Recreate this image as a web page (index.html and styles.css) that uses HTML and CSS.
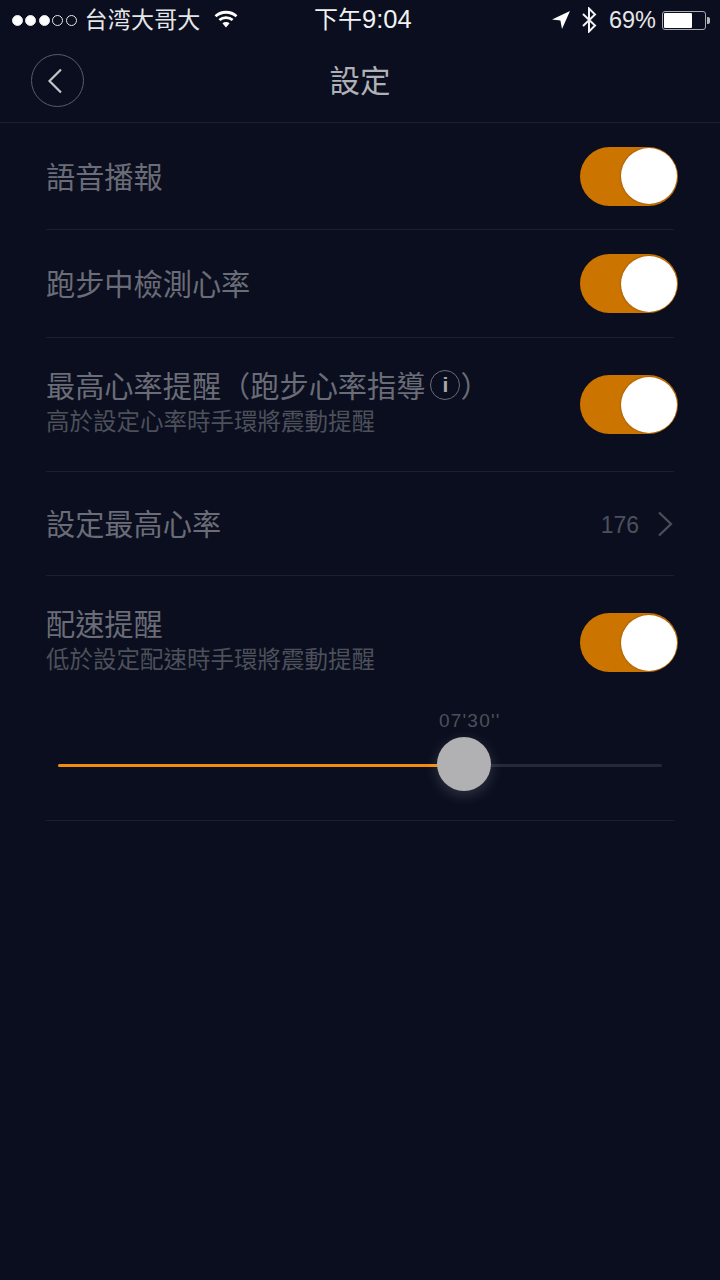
FILE: index.html
```html
<!DOCTYPE html>
<html lang="zh-Hant">
<head>
    <meta charset="UTF-8">
    <meta name="viewport" content="width=device-width, initial-scale=1.0">
    <title>設定</title>
    <link rel="stylesheet" href="styles.css">
</head>
<body>
    <div class="status-bar">
        <div class="status-left">
            <div class="signal">
                <span class="dot on"></span><span class="dot on"></span><span class="dot on"></span><span class="dot"></span><span class="dot"></span>
            </div>
            <span class="carrier">台湾大哥大</span>
            <svg class="wifi" width="24" height="18" viewBox="0 0 24 18">
                <path d="M1.500 6.200C7.400 .9 16.600 .9 22.500 6.200" fill="none" stroke="#fff" stroke-width="2.800"/>
                <path d="M5.400 10C9 6.800 15 6.800 18.600 10" fill="none" stroke="#fff" stroke-width="2.800"/>
                <path d="M8.400 13.200 12 17.500l3.600-4.300c-2-1.700-5.200-1.700-7.200 0z" fill="#fff"/>
            </svg>
        </div>
        <div class="status-time">下午<span class="time-digits">9:04</span></div>
        <div class="status-right">
            <svg class="arrow" width="18" height="18" viewBox="0 0 18 18">
                <path d="M18 0 0 8.600l8.400 .9 1.600 8.500z" fill="#fff"/>
            </svg>
            <svg class="bt" width="16" height="26" viewBox="0 0 16 26">
                <path d="M2 7l12 11.500L8 24.500V1.500l6 6L2 19" fill="none" stroke="#f2f2f3" stroke-width="2"/>
            </svg>
            <span class="battery-pct">69%</span>
            <div class="battery"><div class="battery-level"></div></div>
            <div class="battery-cap"></div>
        </div>
    </div>

    <div class="nav">
        <div class="back">
            <svg width="16" height="26" viewBox="0 0 16 26">
                <path d="M14 1.500 2.500 13 14 24.500" fill="none" stroke="#c4c5c9" stroke-width="2.200"/>
            </svg>
        </div>
        <div class="nav-title">設定</div>
    </div>

    <div class="list">
        <div class="row row-voice">
            <div class="row-title">語音播報</div>
            <div class="toggle"><div class="knob"></div></div>
        </div>
        <div class="row row-detect">
            <div class="row-title">跑步中檢測心率</div>
            <div class="toggle"><div class="knob"></div></div>
        </div>
        <div class="row row-max">
            <div class="row-text">
                <div class="row-title title-info">最高心率提醒（跑步心率指導<span class="info">i</span><span class="paren">）</span></div>
                <div class="row-sub">高於設定心率時手環將震動提醒</div>
            </div>
            <div class="toggle"><div class="knob"></div></div>
        </div>
        <div class="row row-set">
            <div class="row-title">設定最高心率</div>
            <div class="row-value">
                <span class="row-num">176</span>
                <svg width="16" height="26" viewBox="0 0 16 26">
                    <path d="M2 1.500 14 13 2 24.500" fill="none" stroke="#4d505b" stroke-width="2.200"/>
                </svg>
            </div>
        </div>
        <div class="pace">
            <div class="pace-head">
                <div class="row-text">
                    <div class="row-title">配速提醒</div>
                    <div class="row-sub">低於設定配速時手環將震動提醒</div>
                </div>
                <div class="toggle"><div class="knob"></div></div>
            </div>
            <div class="slider-label">07'30''</div>
            <div class="slider">
                <div class="slider-fill" style="width: 66%"></div>
                <div class="slider-thumb"></div>
            </div>
        </div>
    </div>
</body>
</html>
```

FILE: styles.css
```css
body{
    margin: 0;
    width: 720px;
    height: 1280px;
    overflow: hidden;
    background: #0a0e1e;
    font-family: "Noto Sans CJK TC", "Noto Sans", sans-serif;
}

.status-bar{
    height: 40px;
    display: flex;
    align-items: center;
    justify-content: space-between;
    padding: 0 9px 0 12px;
    color: #fff;
    position: relative;
}
.status-left,.status-right{
    display: flex;
    align-items: center;
}
.signal{
    display: flex;
    gap: 2.400px;
}
.dot{
    width: 11px;
    height: 11px;
    box-sizing: border-box;
    border: 1px solid #e8e8ea;
    border-radius: 50%;
}
.dot.on{
    background: #fff;
}
.carrier{
    font-size: 23px;
    line-height: 40px;
    margin: -4px 0 0 8px;
    letter-spacing: 0.200px;
    color: #e6e6e8;
}
.wifi{
    margin-left: 13px;
    margin-top: -3px;
}
.status-time{
    position: absolute;
    left: 314px;
    top: -2px;
    font-size: 24px;
    line-height: 40px;
    color: #f2f2f3;
}
.time-digits{
    font-family: "Liberation Sans", sans-serif;
    font-size: 25.500px;
}
.arrow{
    margin-top: -1px;
}
.bt{
    margin-left: 11px;
    margin-top: -1px;
}
.battery-pct{
    font-family: "Liberation Sans", sans-serif;
    font-size: 23.500px;
    line-height: 40px;
    margin-left: 12px;
    color: #e6e6e8;
}
.battery{
    width: 44px;
    height: 19px;
    box-sizing: border-box;
    border: 1px solid #a9aab0;
    border-radius: 3px;
    padding: 1px;
    margin-left: 6px;
}
.battery-level{
    width: 28px;
    height: 100%;
    background: #fff;
    border-radius: 1px;
}
.battery-cap{
    width: 3px;
    height: 7px;
    background: #b5b6ba;
    border-radius: 0 2px 2px 0;
    margin-left: 1px;
    margin-right: 1px;
}

.nav{
    height: 83px;
    box-sizing: border-box;
    border-bottom: 1px solid #1b2031;
    padding-bottom: 5px;
    display: flex;
    align-items: center;
    justify-content: center;
    position: relative;
}
.back{
    position: absolute;
    left: 31px;
    top: 14px;
    width: 53px;
    height: 53px;
    box-sizing: border-box;
    border: 1.500px solid #5a5c67;
    border-radius: 50%;
    display: flex;
    align-items: center;
    justify-content: center;
    padding-right: 5px;
}
.nav-title{
    font-size: 30.500px;
    color: #b0b1b7;
}

.list{
    margin: 0 46px;
}
.row{
    display: flex;
    align-items: center;
    justify-content: space-between;
    box-sizing: border-box;
    border-bottom: 1px solid #1b2031;
}
.row-voice{ height: 107px; }
.row-detect{ height: 108px; }
.row-max{ height: 134px; }
.row-set{ height: 104px; }
.row-title{
    font-size: 29.200px;
    line-height: 37px;
    color: #6a6c77;
    white-space: nowrap;
}
.row > .row-title{
    margin-top: -2px;
}
.row-sub{
    font-size: 23.500px;
    line-height: 34px;
    color: #4d505b;
    white-space: nowrap;
}
.row-text{
    margin-top: -6px;
}
.title-info{
    display: flex;
    align-items: center;
}
.info{
    width: 30px;
    height: 30px;
    box-sizing: border-box;
    border: 1.500px solid #6a6c77;
    border-radius: 50%;
    margin-left: 5px;
    display: flex;
    align-items: center;
    justify-content: center;
    font-family: "Liberation Sans", sans-serif;
    font-size: 21px;
    font-weight: bold;
    color: #a8a9af;
}
.toggle{
    width: 98px;
    height: 59px;
    margin-right: -4px;
    border-radius: 30px;
    background: #cc7400;
    display: flex;
    align-items: center;
    justify-content: flex-end;
    padding-right: 1px;
    box-sizing: border-box;
}
.knob{
    width: 56px;
    height: 56px;
    border-radius: 50%;
    background: #fff;
    box-shadow: 0 0 2px rgba(70, 35, 0, 0.6);
}
.row-value{
    display: flex;
    align-items: center;
    gap: 18px;
    margin-right: 1px;
    font-family: "Liberation Sans", sans-serif;
    font-size: 23px;
    color: #4d505b;
}
.row-num{
    padding-top: 4px;
}

.pace{
    border-bottom: 1px solid #1b2031;
    height: 245px;
    box-sizing: border-box;
}
.pace-head{
    display: flex;
    align-items: center;
    justify-content: space-between;
    height: 133px;
}
.slider-label{
    font-family: "Liberation Sans", sans-serif;
    font-size: 19px;
    line-height: 24px;
    letter-spacing: 1.200px;
    color: #4d505b;
    padding-left: 393px;
}
.slider{
    position: relative;
    height: 3px;
    margin: 31px 12px 0;
    background: #23283a;
    border-radius: 2px;
}
.slider-fill{
    height: 100%;
    background: #f28c10;
    border-radius: 2px;
}
.slider-thumb{
    position: absolute;
    left: 379px;
    top: -27px;
    width: 54px;
    height: 54px;
    border-radius: 50%;
    background: #b1b1b3;
    box-shadow: 0 4px 14px rgba(255, 255, 255, 0.16);
}
```
